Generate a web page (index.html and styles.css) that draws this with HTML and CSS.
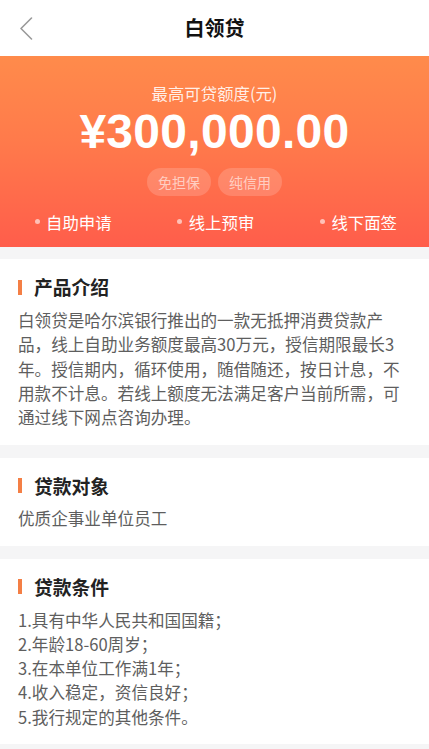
FILE: index.html
```html
<!DOCTYPE html>
<html lang="zh-CN">
<head>
<meta charset="utf-8">
<title>白领贷</title>
<link rel="stylesheet" href="styles.css">
</head>
<body>
<header class="nav">
  <div class="nav-left">
    <svg class="back" width="14" height="23" viewBox="0 0 14 23"><path d="M12.5 1 L2 11.5 L12.5 22" fill="none" stroke="#9a9a9a" stroke-width="1.6" stroke-linecap="round" stroke-linejoin="round"/></svg>
  </div>
  <h1 class="nav-title">白领贷</h1>
  <div class="nav-right"></div>
</header>

<section class="hero">
  <div class="hero-label">最高可贷额度(元)</div>
  <div class="hero-amount">¥300,000.00</div>
  <div class="tags">
    <span class="tag">免担保</span>
    <span class="tag">纯信用</span>
  </div>
  <div class="features">
    <span class="feature">自助申请</span>
    <span class="feature">线上预审</span>
    <span class="feature">线下面签</span>
  </div>
</section>

<section class="card">
  <h2 class="card-title">产品介绍</h2>
  <p class="card-text">白领贷是哈尔滨银行推出的一款无抵押消费贷款产品，线上自助业务额度最高30万元，授信期限最长3年。授信期内，循环使用，随借随还，按日计息，不用款不计息。若线上额度无法满足客户当前所需，可通过线下网点咨询办理。</p>
</section>

<section class="card">
  <h2 class="card-title">贷款对象</h2>
  <p class="card-text">优质企事业单位员工</p>
</section>

<section class="card">
  <h2 class="card-title">贷款条件</h2>
  <ul class="card-list">
    <li>1.具有中华人民共和国国籍；</li>
    <li>2.年龄18-60周岁；</li>
    <li>3.在本单位工作满1年；</li>
    <li>4.收入稳定，资信良好；</li>
    <li>5.我行规定的其他条件。</li>
  </ul>
</section>
</body>
</html>
```

FILE: styles.css
```css
* { box-sizing: border-box; }
html, body { margin: 0; padding: 0; }
body {
  background: #f5f5f6;
  font-family: "Noto Sans CJK SC", "Noto Sans", sans-serif;
  color: #333;
}

.nav {
  height: 55.5px;
  background: #fff;
  display: grid;
  grid-template-columns: 1fr auto 1fr;
  align-items: center;
}
.nav-left { padding-left: 19px; display: flex; align-items: center; padding-top: 1px; }
.nav-title {
  margin: 0;
  font-size: 20px;
  font-weight: 700;
  color: #111;
  line-height: 24px;
}

.hero {
  height: 191px;
  background: linear-gradient(180deg, #ff8b4b 0%, #ff7a4b 45%, #ff5d4b 100%);
  display: flex;
  flex-direction: column;
  align-items: center;
  padding-top: 25.5px;
  color: #fff;
}
.hero-label {
  font-size: 16.4px;
  line-height: 24px;
  color: rgba(255,255,255,0.88);
}
.hero-amount {
  margin-top: 0.3px;
  font-family: "Liberation Sans", Arial, sans-serif;
  font-weight: 700;
  font-size: 48px;
  line-height: 54px;
  letter-spacing: 0.3px;
}
.tags {
  margin-top: 8.4px;
  display: flex;
  gap: 7px;
}
.tag {
  height: 28px;
  line-height: 28px;
  padding: 0 11px;
  border-radius: 14px;
  background: rgba(255,255,255,0.17);
  color: rgba(255,255,255,0.6);
  font-size: 14px;
}
.features {
  margin-top: 15px;
  align-self: stretch;
  display: flex;
  justify-content: space-between;
  padding: 0 32px 0 34.5px;
  font-size: 16.4px;
  line-height: 22px;
}
.feature {
  display: flex;
  align-items: center;
  color: #fff;
}
.feature::before {
  content: "";
  width: 5px;
  height: 5px;
  border-radius: 50%;
  background: rgba(255,255,255,0.6);
  margin-right: 6.5px;
}

.card {
  background: #fff;
  margin-top: 12.8px;
  padding: 16px 18px 15.5px;
}
.card-title {
  margin: 0;
  display: flex;
  align-items: center;
  font-size: 18.8px;
  line-height: 24px;
  font-weight: 700;
  color: #222;
}
.card-title::before {
  content: "";
  width: 3.5px;
  height: 15px;
  background: #f47f45;
  margin-right: 12.5px;
}
.card-text {
  margin: 8.9px 0 0;
  font-size: 16.6px;
  line-height: 24.2px;
  color: #5e5e5e;
}
.card-list {
  list-style: none;
  margin: 8.9px 0 0;
  padding: 0;
  font-size: 16.6px;
  line-height: 24.2px;
  color: #5e5e5e;
}
```
